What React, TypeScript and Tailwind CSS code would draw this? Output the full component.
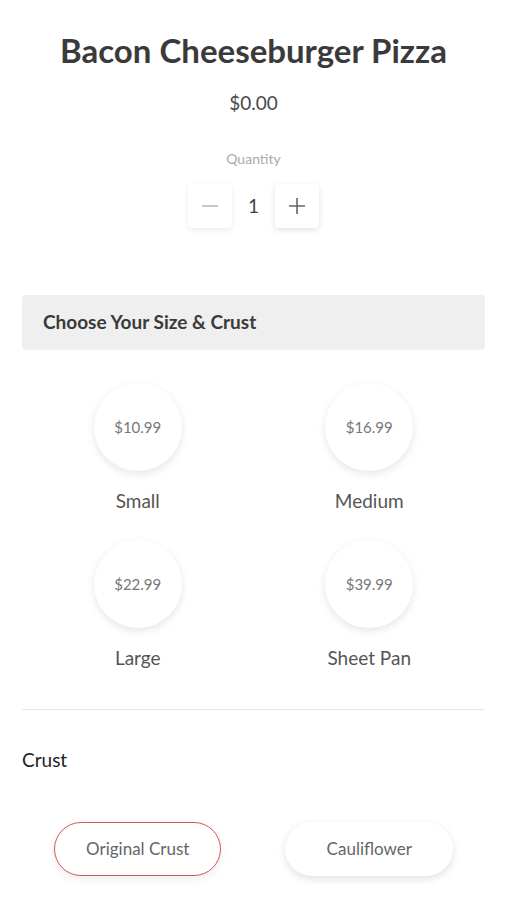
import React, { useState } from 'react';

const sizes = [
  { name: 'Small', price: '$10.99' },
  { name: 'Medium', price: '$16.99' },
  { name: 'Large', price: '$22.99' },
  { name: 'Sheet Pan', price: '$39.99' },
];

const crusts = ['Original Crust', 'Cauliflower'];

export default function App() {
  const [qty, setQty] = useState(1);
  const [crust, setCrust] = useState('Original Crust');

  return (
    <div className="min-h-screen bg-white px-[22px] pt-[30px] text-[#444]" style={{ fontFamily: 'Lato, "Open Sans", sans-serif' }}>
      <h1 className="text-center text-[33px] font-bold leading-[40px] text-[#3a3a3a]">Bacon Cheeseburger Pizza</h1>
      <p className="mt-[21px] text-center text-[19px] leading-[24px] text-[#4a4a4a]">$0.00</p>

      <p className="mt-[35px] text-center text-[14px] leading-[18px] text-[#aaa]">Quantity</p>
      <div className="mt-[16px] flex items-center justify-center">
        <button
          onClick={() => setQty(Math.max(1, qty - 1))}
          className="flex h-[44px] w-[44px] items-center justify-center rounded bg-white shadow-[0_2px_6px_rgba(0,0,0,0.08)]"
        >
          <svg width="20" height="20" viewBox="0 0 20 20"><path d="M2 10h16" stroke="#bbb" strokeWidth="1.6" /></svg>
        </button>
        <span className="w-[43px] text-center text-[19px] text-[#444]">{qty}</span>
        <button
          onClick={() => setQty(qty + 1)}
          className="flex h-[44px] w-[44px] items-center justify-center rounded bg-white shadow-[0_2px_6px_rgba(0,0,0,0.12)]"
        >
          <svg width="20" height="20" viewBox="0 0 20 20"><path d="M2 10h16M10 2v16" stroke="#666" strokeWidth="1.6" /></svg>
        </button>
      </div>

      <div className="mt-[67px] flex h-[55px] items-center rounded-sm bg-[#efefef] px-[21px]">
        <h2 className="text-[19px] font-bold text-[#3a3a3a]">Choose Your Size &amp; Crust</h2>
      </div>

      <div className="mt-[33px] grid grid-cols-2 gap-y-[27px]">
        {sizes.map((s) => (
          <button key={s.name} className="flex flex-col items-center">
            <div className="flex h-[88px] w-[88px] items-center justify-center rounded-full bg-white shadow-[0_3px_8px_rgba(0,0,0,0.10)]">
              <span className="text-[15px] text-[#777]">{s.price}</span>
            </div>
            <span className="mt-[18px] text-[19px] leading-[24px] text-[#555]">{s.name}</span>
          </button>
        ))}
      </div>

      <div className="mt-[39px] h-px bg-[#e6e6e6]" />

      <p className="mt-[38px] text-[19px] leading-[24px] text-[#222]">Crust</p>

      <div className="mt-[50px] grid grid-cols-2">
        {crusts.map((c) => (
          <div key={c} className="flex justify-center">
            <button
              onClick={() => setCrust(c)}
              className={
                crust === c
                  ? 'h-[54px] w-[167px] rounded-full border-[1.5px] border-[#d05a5a] bg-white text-[17px] text-[#666] shadow-[0_3px_8px_rgba(0,0,0,0.08)]'
                  : 'h-[54px] w-[168px] rounded-full bg-white text-[17px] text-[#666] shadow-[0_3px_8px_rgba(0,0,0,0.12)]'
              }
            >
              {c}
            </button>
          </div>
        ))}
      </div>
    </div>
  );
}
